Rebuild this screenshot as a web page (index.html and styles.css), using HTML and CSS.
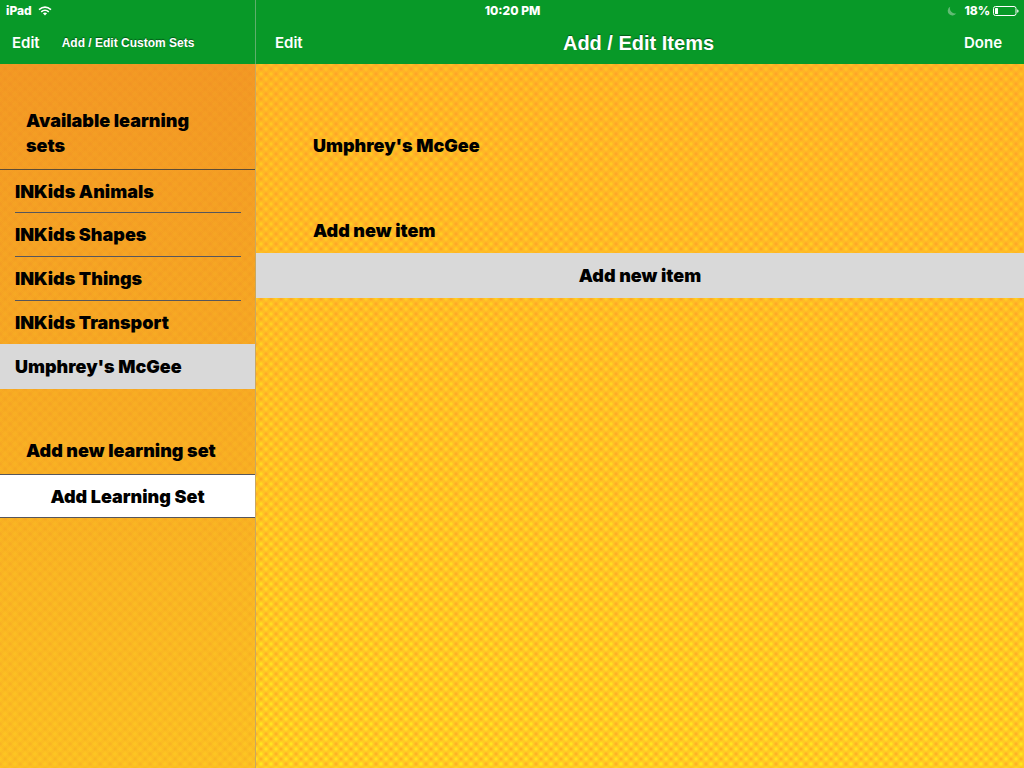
FILE: index.html
```html
<!DOCTYPE html>
<html lang="en">
<head>
<meta charset="utf-8">
<meta name="viewport" content="width=device-width, initial-scale=1">
<title>Add / Edit Items</title>
<link rel="stylesheet" href="styles.css">
</head>
<body>
<div class="app">
  <header class="status">
    <div class="status-left"><span>iPad</span>
      <svg class="wifi" viewBox="0 0 14 10" width="14" height="10" aria-hidden="true"><path d="M1 3.7Q7-1.3 13 3.7M3.2 5.8Q7 2.7 10.8 5.8" fill="none" stroke="currentColor" stroke-width="1.6"/><path d="M4.9 7.3Q7 5.6 9.1 7.3L7 9.6Z" fill="currentColor"/></svg>
    </div>
    <span class="time">10:20 PM</span>
    <div class="status-right">
      <svg class="moon" viewBox="0 0 10 10" width="10" height="10" aria-hidden="true"><path d="M3.2.8A4.6 4.6 0 1 0 9.3 7.2 5 5 0 0 1 3.2.8Z" fill="currentColor"/></svg>
      <span>18%</span>
      <svg viewBox="0 0 26 10" width="26" height="10" aria-hidden="true"><rect x=".5" y=".5" width="22.5" height="9" rx="2" fill="none" stroke="currentColor"/><rect x="2" y="2" width="3" height="6" rx=".6" fill="currentColor"/><path d="M24.2 3.2Q25.6 3.6 25.6 5T24.2 6.8Z" fill="currentColor"/></svg>
    </div>
  </header>
  <aside class="sidebar">
    <div class="bar bar-side"><button class="bar-btn">Edit</button><h1 class="title-small">Add / Edit Custom Sets</h1></div>
    <div class="side-body">
      <h2 class="heading heading-sets">Available learning sets</h2>
      <ul class="sets">
        <li><button class="row">INKids Animals</button></li>
        <li><button class="row">INKids Shapes</button></li>
        <li><button class="row">INKids Things</button></li>
        <li><button class="row">INKids Transport</button></li>
        <li class="selected"><button class="row">Umphrey's McGee</button></li>
      </ul>
      <h2 class="heading heading-new">Add new learning set</h2>
      <button class="add-set">Add Learning Set</button>
    </div>
  </aside>
  <main class="detail">
    <div class="bar bar-main"><button class="bar-btn">Edit</button><h1 class="title">Add / Edit Items</h1><button class="bar-btn done">Done</button></div>
    <div class="main-body">
      <h2 class="heading heading-name">Umphrey's McGee</h2>
      <h2 class="heading heading-item">Add new item</h2>
      <button class="add-item">Add new item</button>
    </div>
  </main>
</div>
</body>
</html>
```
FILE: styles.css
```css
* { box-sizing: border-box; }
body { margin: 0; font-family: Inter, "Liberation Sans", sans-serif; }
h1, h2, ul { margin: 0; padding: 0; }
button { border: 0; background: none; padding: 0; font: inherit; color: inherit; cursor: pointer; }
.app { display: grid; grid-template-columns: 1fr 3fr; grid-template-rows: 22px 1fr; min-height: 100vh; background: #089928; }
.status { grid-column: 1 / -1; display: grid; grid-template-columns: 1fr auto 1fr; align-items: center; padding: 0 5px 0 6px; color: #fff; font-size: 12px; font-weight: 800; line-height: 22px; background: linear-gradient(90deg, transparent calc(25% - 1px), #5fae6c 0 25%, transparent 0); }
.status-left, .status-right { display: flex; align-items: center; gap: 6px; }
.status-right { justify-content: flex-end; gap: 3px; }
.moon { color: #62bb74; margin-right: 4px; }
.sidebar, .detail { display: flex; flex-direction: column; }
.bar { height: 42px; display: grid; align-items: center; color: #fff; background: #089928; }
.bar-side { grid-template-columns: auto 1fr; gap: 22px; padding: 0 11px 0 12px; border-right: 1px solid #5fae6c; }
.bar-main { grid-template-columns: 1fr auto 1fr; padding: 0 22px 0 19px; }
.bar-btn { font-size: 15px; font-weight: 600; line-height: 20px; justify-self: start; }
.done { justify-self: end; }
.title-small, .title { font-family: "Liberation Sans", Arial, sans-serif; font-weight: 700; text-shadow: 0 -1px 1px #04591a; white-space: nowrap; }
.title-small { font-size: 12px; line-height: 20px; }
.title { font-size: 20px; }
.side-body { flex: 1; border-right: 1px solid #c9a860; background:
  radial-gradient(circle, #ef7a2650 0, #ef7a2600 5px) 0 0 / 10px 10px,
  radial-gradient(circle, #ef7a2650 0, #ef7a2600 5px) 5px 5px / 10px 10px,
  linear-gradient(#f39d24, #fecc22); }
.main-body { flex: 1; background:
  radial-gradient(circle, #ff922ecc 0, #ff922e00 5px) 0 0 / 10px 10px,
  radial-gradient(circle, #ff922ecc 0, #ff922e00 5px) 5px 5px / 10px 10px,
  linear-gradient(#ffcb20, #fff41c); }
.heading, .row, .add-set, .add-item { font-size: 18px; font-weight: 900; line-height: 25px; color: #000; }
.heading-sets { padding: 44px 52px 11px 26px; border-bottom: 1px solid #5c4b35; }
.sets { list-style: none; }
.sets li { height: 44px; padding: 0 14px 0 15px; }
.row { display: block; width: 100%; height: 100%; text-align: left; border-bottom: 1px solid #56565c; }
.sets li:nth-child(1), .sets li:nth-child(4) { height: 43px; }
.sets li:nth-child(4) .row { border-bottom: 0; }
.sets .selected { height: 45px; background: #d9d9d9; }
.selected .row { border-bottom: 0; }
.heading-new { padding: 49px 0 11px 26px; }
.add-set { display: block; width: 100%; height: 44px; background: #fff; border-top: 1px solid #56565c; border-bottom: 1px solid #56565c; }
.heading-name { padding: 69px 57px 60px; }
.heading-item { padding: 0 57px 10px; }
.add-item { display: block; width: 100%; height: 45px; background: #d9d9d9; }
```
